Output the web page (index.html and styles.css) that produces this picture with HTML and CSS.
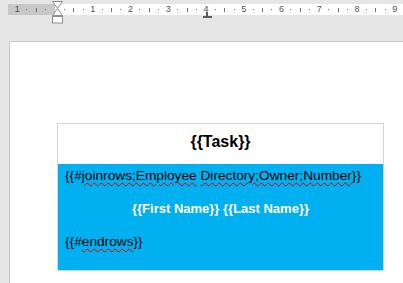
FILE: index.html
```html
<!DOCTYPE html>
<html>
<head>
  <title>Document template</title>
  <link rel="stylesheet" href="styles.css">
</head>
<body>
  <div class="app">
    <div class="ruler-row">
      <div class="ruler">
        <div class="ticks">
          <span class="cell"></span><span class="cell"><i class="dot"></i></span><span class="cell"><i class="half"></i></span><span class="cell"><i class="dot"></i></span>
          <span class="cell num">1</span><span class="cell"><i class="dot"></i></span><span class="cell"><i class="half"></i></span><span class="cell"><i class="dot"></i></span>
          <span class="cell"></span><span class="cell"><i class="dot"></i></span><span class="cell"><i class="half"></i></span><span class="cell"><i class="dot"></i></span>
          <span class="cell num">1</span><span class="cell"><i class="dot"></i></span><span class="cell"><i class="half"></i></span><span class="cell"><i class="dot"></i></span>
          <span class="cell num">2</span><span class="cell"><i class="dot"></i></span><span class="cell"><i class="half"></i></span><span class="cell"><i class="dot"></i></span>
          <span class="cell num">3</span><span class="cell"><i class="dot"></i></span><span class="cell"><i class="half"></i></span><span class="cell"><i class="dot"></i></span>
          <span class="cell num">4</span><span class="cell"><i class="dot"></i></span><span class="cell"><i class="half"></i></span><span class="cell"><i class="dot"></i></span>
          <span class="cell num">5</span><span class="cell"><i class="dot"></i></span><span class="cell"><i class="half"></i></span><span class="cell"><i class="dot"></i></span>
          <span class="cell num">6</span><span class="cell"><i class="dot"></i></span><span class="cell"><i class="half"></i></span><span class="cell"><i class="dot"></i></span>
          <span class="cell num">7</span><span class="cell"><i class="dot"></i></span><span class="cell"><i class="half"></i></span><span class="cell"><i class="dot"></i></span>
          <span class="cell num">8</span><span class="cell"><i class="dot"></i></span><span class="cell"><i class="half"></i></span><span class="cell"><i class="dot"></i></span>
          <span class="cell num">9</span><span class="cell"><i class="dot"></i></span>
        </div>
      </div>

      <!-- indent handles -->
      <svg class="indent-marker" width="11" height="23" viewBox="0 0 11 23">
        <path d="M0.5 0.5 H10.5 L5.5 7.5 Z" fill="#fff" stroke="#8c8c8c"/>
        <path d="M5.5 7.5 L10.5 14.5 H0.5 Z" fill="#fff" stroke="#8c8c8c"/>
        <rect x="0.5" y="15.5" width="10" height="6.5" fill="#fff" stroke="#8c8c8c"/>
      </svg>

      <!-- center tab stop -->
      <svg class="tab-marker" width="9" height="6" viewBox="0 0 9 6">
        <rect x="3" y="0" width="2" height="5" fill="#5a5a5a"/>
        <rect x="0" y="4" width="9" height="2" fill="#5a5a5a"/>
      </svg>
    </div>

    <div class="page">
      <div class="doc-table">
        <div class="task-row">{{Task}}</div>
        <div class="repeat-row">
          <p class="field">{{#<span class="misspelled">joinrows;Employee</span> <span class="misspelled">Directory;Owner;Number</span>}}</p>
          <p class="field field-name">{{First Name}} {{Last Name}}</p>
          <p class="field">{{#<span class="misspelled">endrows</span>}}</p>
        </div>
      </div>
    </div>
  </div>
</body>
</html>
```

FILE: styles.css
```css
:root {
  --app-background: #e6e6e6;
  --ruler-margin: #c8c8c8;
  --page-border: #c6c6c6;
  --table-border: #d4d4d4;
  --row-blue: #00b0f0;
}

* {
  margin: 0;
  padding: 0;
  box-sizing: border-box;
}

body {
  background-color: var(--app-background);
  font-family: 'Liberation Sans', Arial, sans-serif;
  overflow: hidden;
}

.app {
  width: 403px;
  height: 283px;
  display: flex;
  flex-direction: column;
}

.ruler-row {
  position: relative;
  height: 41px;
  flex: none;
  padding-top: 4px;
}

.ruler {
  margin-left: 8px;
  height: 11px;
  overflow: hidden;
  background: linear-gradient(to right, var(--ruler-margin) 47px, #fff 47px);
}

.ticks {
  display: flex;
  margin-left: -33.3px;
  height: 11px;
}

.cell {
  flex: none;
  width: 9.45px;
  height: 11px;
  display: flex;
  align-items: center;
  justify-content: center;
}

.num {
  font-size: 9px;
  color: #505050;
  line-height: 11px;
}

.dot {
  display: block;
  width: 1px;
  height: 1px;
  background-color: #707070;
}

.half {
  display: block;
  width: 1px;
  height: 4px;
  background-color: #707070;
}

.indent-marker {
  position: absolute;
  left: 52px;
  top: 1px;
}

.tab-marker {
  position: absolute;
  left: 203px;
  top: 12px;
}

.page {
  flex: 1;
  margin-left: 9px;
  background-color: #fff;
  border-left: 1px solid var(--page-border);
  border-top: 1px solid var(--page-border);
}

.doc-table {
  width: 327px;
  margin: 81px 0 0 47px;
  border: 1px solid var(--table-border);
}

.task-row {
  height: 40px;
  display: flex;
  justify-content: center;
  align-items: center;
  padding-bottom: 4px;
  font-size: 16px;
  font-weight: bold;
  color: #000;
}

.repeat-row {
  height: 106px;
  background-color: var(--row-blue);
  padding: 4px 7px 0;
}

.field {
  font-size: 13.7px;
  line-height: 16px;
  color: #000;
  margin-bottom: 17px;
  white-space: nowrap;
}

.field-name {
  text-align: center;
  font-size: 13px;
  font-weight: bold;
  color: #fff;
}

.misspelled {
  text-decoration: underline wavy #e00000;
  text-decoration-thickness: 1px;
  text-underline-offset: 2px;
}
```
